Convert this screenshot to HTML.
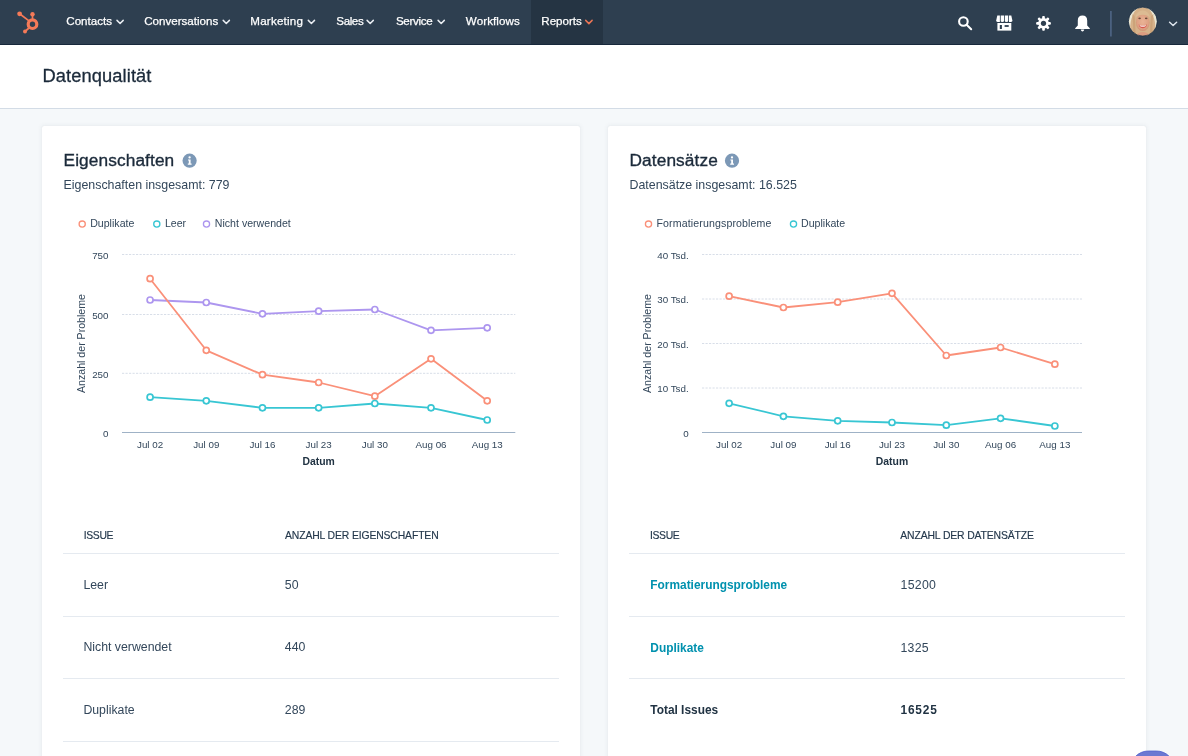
<!DOCTYPE html>
<html><head><meta charset="utf-8">
<style>
*{margin:0;padding:0;box-sizing:border-box}
html,body{width:1188px;height:756px;overflow:hidden;background:#f5f8fa;font-family:"Liberation Sans",sans-serif;color:#33475b}
.a{position:absolute;white-space:nowrap;line-height:1}
#nav{position:absolute;left:0;top:0;width:1188px;height:45px;background:#2e3f50;border-bottom:1px solid #17283b}
#rep{position:absolute;left:531px;top:0;width:72px;height:44px;background:#253443}
#hdr{position:absolute;left:0;top:45px;width:1188px;height:64px;background:#fff;border-bottom:1px solid #d3dce6}
.card{position:absolute;top:126px;width:538px;height:640px;background:#fff;border-radius:2px;box-shadow:0 0 1px rgba(45,62,80,.10),0 0 4px 1px rgba(45,62,80,.05)}
.nv{position:absolute;top:15.1px;font-size:11.6px;color:#fff;line-height:1;white-space:nowrap;-webkit-text-stroke:.25px #fff}
.ttl{font-size:17.3px;color:#1b2a3a;letter-spacing:.1px;-webkit-text-stroke:.35px #1b2a3a}
.sub{font-size:12.4px;color:#33475b}
.lg{font-size:10.6px;color:#33475b}
.th{font-size:10.4px;color:#24384c;-webkit-text-stroke:.15px #24384c;letter-spacing:-.13px}
.td{font-size:12.3px;color:#33475b}
.lk{font-size:11.9px;color:#0091ae;font-weight:bold}
.bd{font-size:11.9px;color:#213343;font-weight:bold}
.ln{position:absolute;height:1px;background:#e5eaf0}
svg text{font-family:"Liberation Sans",sans-serif}
.tk{font-size:9.8px;fill:#33475b}
.dt{font-size:10.4px;font-weight:bold;fill:#213343}
.yl{font-size:10.6px;fill:#33475b}
</style></head><body>
<div id="pg" style="position:absolute;left:0;top:0;width:1188px;height:756px;overflow:hidden;background:#f5f8fa;will-change:transform">
<div id="nav"></div>
<div id="rep"></div>
<div id="hdr"></div>

<!-- nav text -->
<div class="nv" style="left:66.3px">Contacts</div>
<div class="nv" style="left:144.2px">Conversations</div>
<div class="nv" style="left:250.3px;letter-spacing:.22px">Marketing</div>
<div class="nv" style="left:336.3px;letter-spacing:-.4px">Sales</div>
<div class="nv" style="left:395.9px;letter-spacing:-.3px">Service</div>
<div class="nv" style="left:465.8px;letter-spacing:.1px">Workflows</div>
<div class="nv" style="left:541.3px">Reports</div>

<div class="a" style="left:42.5px;top:67.1px;font-size:18.3px;letter-spacing:.1px;color:#1b2a3a;-webkit-text-stroke:.3px #1b2a3a">Datenqualität</div>

<div class="card" style="left:42px"></div>
<div class="card" style="left:608px"></div>

<!-- left card text -->
<div class="a ttl" style="left:63.5px;top:152.3px">Eigenschaften</div>
<div class="a sub" style="left:63.5px;top:178.5px">Eigenschaften insgesamt: 779</div>
<div class="a lg" style="left:90.2px;top:217.7px">Duplikate</div>
<div class="a lg" style="left:164.9px;top:217.7px">Leer</div>
<div class="a lg" style="left:214.8px;top:217.7px">Nicht verwendet</div>

<div class="a th" style="left:83.7px;top:531.2px;letter-spacing:-.35px">ISSUE</div>
<div class="a th" style="left:285px;top:531.2px">ANZAHL DER EIGENSCHAFTEN</div>
<div class="ln" style="left:63px;top:553px;width:496px"></div>
<div class="a td" style="left:83.4px;top:578.6px">Leer</div>
<div class="a td" style="left:284.8px;top:578.6px">50</div>
<div class="ln" style="left:63px;top:616px;width:496px"></div>
<div class="a td" style="left:83.4px;top:641.2px">Nicht verwendet</div>
<div class="a td" style="left:284.8px;top:641.2px">440</div>
<div class="ln" style="left:63px;top:678px;width:496px"></div>
<div class="a td" style="left:83.4px;top:703.8px">Duplikate</div>
<div class="a td" style="left:284.8px;top:703.8px">289</div>
<div class="ln" style="left:63px;top:741px;width:496px"></div>

<!-- right card text -->
<div class="a ttl" style="left:629.5px;top:152.3px">Datensätze</div>
<div class="a sub" style="left:629.5px;top:178.5px">Datensätze insgesamt: 16.525</div>
<div class="a lg" style="left:656.4px;top:217.7px;letter-spacing:.13px">Formatierungsprobleme</div>
<div class="a lg" style="left:801px;top:217.7px">Duplikate</div>

<div class="a th" style="left:650px;top:531.2px;letter-spacing:-.35px">ISSUE</div>
<div class="a th" style="left:900.3px;top:531.2px">ANZAHL DER DATENSÄTZE</div>
<div class="ln" style="left:629px;top:553px;width:496px"></div>
<div class="a lk" style="left:650.3px;top:580px">Formatierungsprobleme</div>
<div class="a td" style="left:900.5px;top:578.6px;letter-spacing:.3px">15200</div>
<div class="ln" style="left:629px;top:616px;width:496px"></div>
<div class="a lk" style="left:650.3px;top:643px">Duplikate</div>
<div class="a td" style="left:900.5px;top:641.9px;letter-spacing:.25px">1325</div>
<div class="ln" style="left:629px;top:678px;width:496px"></div>
<div class="a bd" style="left:650.3px;top:705.4px">Total Issues</div>
<div class="a bd" style="left:900.5px;top:705.4px;letter-spacing:.8px">16525</div>

<svg style="position:absolute;left:0;top:0" width="1188" height="756" viewBox="0 0 1188 756">
<!-- nav chevrons -->
<g fill="none" stroke="#e9edf2" stroke-width="1.5" stroke-linecap="round" stroke-linejoin="round">
<path d="M117 20.4l3.1 3.1l3.1-3.1"/>
<path d="M223.2 20.4l3.1 3.1l3.1-3.1"/>
<path d="M308.3 20.4l3.1 3.1l3.1-3.1"/>
<path d="M367.1 20.4l3.1 3.1l3.1-3.1"/>
<path d="M438.1 20.4l3.1 3.1l3.1-3.1"/>
<path d="M1169.6 22.3l3.5 3.2l3.5-3.2" stroke="#dfe6ee"/>
</g>
<path d="M585.7 20.4l3.2 3.2l3.2-3.2" fill="none" stroke="#ea7556" stroke-width="1.5" stroke-linecap="round" stroke-linejoin="round"/>
<!-- hubspot logo -->
<g fill="#f57a58" stroke="#f57a58">
<circle cx="32.5" cy="24.2" r="4.3" fill="none" stroke-width="3.2"/>
<line x1="19.6" y1="13.8" x2="30" y2="21.6" stroke-width="1.7"/>
<line x1="32.5" y1="14.3" x2="32.5" y2="19.5" stroke-width="1.7"/>
<line x1="25" y1="31.5" x2="29.5" y2="27.5" stroke-width="1.7"/>
<circle cx="19.6" cy="13.8" r="2.4" stroke="none"/>
<circle cx="32.5" cy="14.3" r="2.2" stroke="none"/>
<circle cx="25" cy="31.5" r="2" stroke="none"/>
</g>
<!-- search -->
<circle cx="963.4" cy="21.5" r="4.3" fill="none" stroke="#fff" stroke-width="2.1"/>
<line x1="966.6" y1="24.7" x2="971.2" y2="29.3" stroke="#fff" stroke-width="2" stroke-linecap="round"/>
<!-- marketplace -->
<g fill="#fff">
<path d="M997.3 15.5H999.9V22H997.6Q996 22 996.2 20.6Z"/>
<path d="M1000.7 15.5H1004V21.1Q1004 22 1002.35 22Q1000.7 22 1000.7 21.1Z"/>
<path d="M1004.8 15.5H1008.2V21.1Q1008.2 22 1006.5 22Q1004.8 22 1004.8 21.1Z"/>
<path d="M1009 15.5H1011.3L1012.4 20.6Q1012.6 22 1011 22H1009Z"/>
<rect x="997.4" y="23" width="13.9" height="7.6"/>
</g>
<g fill="#2e3f50">
<rect x="999.8" y="25" width="2.1" height="4"/>
<rect x="1004.6" y="25.1" width="4.1" height="1.8"/>
</g>
<!-- gear -->
<g transform="translate(1043.5 23.3)" fill="#fff">
<circle r="5.3"/>
<g id="teeth"><rect x="-1.35" y="-7.4" width="2.7" height="3.6" rx="1"/></g>
<use href="#teeth" transform="rotate(45)"/><use href="#teeth" transform="rotate(90)"/><use href="#teeth" transform="rotate(135)"/>
<use href="#teeth" transform="rotate(180)"/><use href="#teeth" transform="rotate(225)"/><use href="#teeth" transform="rotate(270)"/><use href="#teeth" transform="rotate(315)"/>
<circle r="2.6" fill="#2e3f50"/>
</g>
<!-- bell -->
<path d="M1082.5 15.6c-3 0-4.7 1.9-4.7 4.9v5l-2.6 2.7v.7h14.6v-.7l-2.6-2.7v-5c0-3-1.7-4.9-4.7-4.9z" fill="#fff"/>
<path d="M1080.8 29.6h3.4c0 1.1-.8 1.9-1.7 1.9s-1.7-.8-1.7-1.9z" fill="#fff"/>
<!-- separator -->
<rect x="1110" y="11" width="1.8" height="25.5" fill="#4b6180"/>
<!-- avatar -->
<defs>
<clipPath id="avc"><circle cx="1142.8" cy="21.6" r="14.3"/></clipPath>
<radialGradient id="skin" cx="50%" cy="45%" r="60%">
<stop offset="0" stop-color="#eab295"/><stop offset=".7" stop-color="#dea183"/><stop offset="1" stop-color="#c98a6c"/>
</radialGradient>
</defs>
<g clip-path="url(#avc)">
<rect x="1128" y="7" width="30" height="30" fill="#e9e6d3"/>
<path d="M1130.5 37c-1-9 0-17 2-21c2-6 6-9 10.3-9s8.5 3 10.3 9c2 4 3 12 2 21z" fill="#d6b28a"/>
<ellipse cx="1142.8" cy="22.5" rx="6.8" ry="8.6" fill="url(#skin)"/>
<path d="M1135.5 17.5c.5-4 3.5-7 7.3-7s6.8 3 7.3 7c-2-2.2-4.5-2.8-7.3-2.8s-5.3.6-7.3 2.8z" fill="#dcbb93"/>
<path d="M1136 37c.5-3 3-5 6.8-5s6.3 2 6.8 5z" fill="#dc9c80"/>
<path d="M1132 14c1 5 1.5 12 1 20l2.5 1c0-8-.3-14-1-19z" fill="#c49a6e" opacity=".6"/>
<path d="M1153.6 14c-1 5-1.5 12-1 20l-2.5 1c0-8 .3-14 1-19z" fill="#c49a6e" opacity=".6"/>
<ellipse cx="1139.6" cy="18.4" rx="1.3" ry=".8" fill="#6b4a3a"/>
<ellipse cx="1146.2" cy="18.4" rx="1.3" ry=".8" fill="#6b4a3a"/>
<path d="M1138.6 24.6c2.5 1.2 5.9 1.2 8.4 0c-.6 2.6-2.2 3.6-4.2 3.6s-3.6-1-4.2-3.6z" fill="#d9574f"/>
<path d="M1139.3 24.9c2.2.9 4.8.9 7 0c-.4 1.3-1.8 1.8-3.5 1.8s-3.1-.5-3.5-1.8z" fill="#f6efe9"/>
</g>
<circle cx="1142.8" cy="21.6" r="14.5" fill="none" stroke="#1b2c40" stroke-width=".8"/>
<!-- info icons -->
<g transform="translate(189.6 160.7)">
<circle r="7.1" fill="#7c98b6"/>
<circle cx="0" cy="-3.3" r="1.15" fill="#fff"/>
<path d="M-1.6 -1.3h2.6v4.2h1v1.2h-3.8v-1.2h1v-3h-.8z" fill="#fff"/>
</g>
<g transform="translate(732 160.7)">
<circle r="7.1" fill="#7c98b6"/>
<circle cx="0" cy="-3.3" r="1.15" fill="#fff"/>
<path d="M-1.6 -1.3h2.6v4.2h1v1.2h-3.8v-1.2h1v-3h-.8z" fill="#fff"/>
</g>
<!-- legend markers -->
<circle cx="82.2" cy="224.1" r="3.1" fill="#fff" stroke="#fa9079" stroke-width="1.3"/>
<circle cx="156.8" cy="224.1" r="3.1" fill="#fff" stroke="#38c6d3" stroke-width="1.3"/>
<circle cx="206.5" cy="224.1" r="3.1" fill="#fff" stroke="#ad96ef" stroke-width="1.3"/>
<circle cx="648.5" cy="224.1" r="3.1" fill="#fff" stroke="#fa9079" stroke-width="1.3"/>
<circle cx="793.5" cy="224.1" r="3.1" fill="#fff" stroke="#38c6d3" stroke-width="1.3"/>
<text x="108.5" y="436.80" text-anchor="end" class="tk">0</text>
<line x1="122" y1="373.30" x2="515.3" y2="373.30" stroke="#d8dee8" stroke-width="1" stroke-dasharray="2.2 1.3"/>
<text x="108.5" y="377.60" text-anchor="end" class="tk">250</text>
<line x1="122" y1="314.50" x2="515.3" y2="314.50" stroke="#d8dee8" stroke-width="1" stroke-dasharray="2.2 1.3"/>
<text x="108.5" y="318.80" text-anchor="end" class="tk">500</text>
<line x1="122" y1="254.50" x2="515.3" y2="254.50" stroke="#d8dee8" stroke-width="1" stroke-dasharray="2.2 1.3"/>
<text x="108.5" y="258.80" text-anchor="end" class="tk">750</text>
<line x1="122" y1="432.5" x2="515.3" y2="432.5" stroke="#9fb2c6" stroke-width="1.1"/>
<text x="150.09" y="448.4" text-anchor="middle" class="tk">Jul 02</text>
<text x="206.28" y="448.4" text-anchor="middle" class="tk">Jul 09</text>
<text x="262.46" y="448.4" text-anchor="middle" class="tk">Jul 16</text>
<text x="318.65" y="448.4" text-anchor="middle" class="tk">Jul 23</text>
<text x="374.84" y="448.4" text-anchor="middle" class="tk">Jul 30</text>
<text x="431.02" y="448.4" text-anchor="middle" class="tk">Aug 06</text>
<text x="487.21" y="448.4" text-anchor="middle" class="tk">Aug 13</text>
<text x="318.65" y="465" text-anchor="middle" class="dt">Datum</text>
<text transform="translate(85.2,343.50) rotate(-90)" text-anchor="middle" class="yl">Anzahl der Probleme</text>
<polyline points="150.09,300 206.28,302.5 262.46,313.8 318.65,311.2 374.84,309.5 431.02,330.3 487.21,327.8" fill="none" stroke="#ad96ef" stroke-width="1.8" stroke-linejoin="round"/>
<circle cx="150.09" cy="300" r="3" fill="#fff" stroke="#ad96ef" stroke-width="1.7"/>
<circle cx="206.28" cy="302.5" r="3" fill="#fff" stroke="#ad96ef" stroke-width="1.7"/>
<circle cx="262.46" cy="313.8" r="3" fill="#fff" stroke="#ad96ef" stroke-width="1.7"/>
<circle cx="318.65" cy="311.2" r="3" fill="#fff" stroke="#ad96ef" stroke-width="1.7"/>
<circle cx="374.84" cy="309.5" r="3" fill="#fff" stroke="#ad96ef" stroke-width="1.7"/>
<circle cx="431.02" cy="330.3" r="3" fill="#fff" stroke="#ad96ef" stroke-width="1.7"/>
<circle cx="487.21" cy="327.8" r="3" fill="#fff" stroke="#ad96ef" stroke-width="1.7"/>
<polyline points="150.09,278.7 206.28,350.3 262.46,374.7 318.65,382.5 374.84,396.2 431.02,358.8 487.21,400.8" fill="none" stroke="#fa9079" stroke-width="1.8" stroke-linejoin="round"/>
<circle cx="150.09" cy="278.7" r="3" fill="#fff" stroke="#fa9079" stroke-width="1.7"/>
<circle cx="206.28" cy="350.3" r="3" fill="#fff" stroke="#fa9079" stroke-width="1.7"/>
<circle cx="262.46" cy="374.7" r="3" fill="#fff" stroke="#fa9079" stroke-width="1.7"/>
<circle cx="318.65" cy="382.5" r="3" fill="#fff" stroke="#fa9079" stroke-width="1.7"/>
<circle cx="374.84" cy="396.2" r="3" fill="#fff" stroke="#fa9079" stroke-width="1.7"/>
<circle cx="431.02" cy="358.8" r="3" fill="#fff" stroke="#fa9079" stroke-width="1.7"/>
<circle cx="487.21" cy="400.8" r="3" fill="#fff" stroke="#fa9079" stroke-width="1.7"/>
<polyline points="150.09,397.2 206.28,400.8 262.46,407.8 318.65,407.8 374.84,403.5 431.02,407.8 487.21,420" fill="none" stroke="#38c6d3" stroke-width="1.8" stroke-linejoin="round"/>
<circle cx="150.09" cy="397.2" r="3" fill="#fff" stroke="#38c6d3" stroke-width="1.7"/>
<circle cx="206.28" cy="400.8" r="3" fill="#fff" stroke="#38c6d3" stroke-width="1.7"/>
<circle cx="262.46" cy="407.8" r="3" fill="#fff" stroke="#38c6d3" stroke-width="1.7"/>
<circle cx="318.65" cy="407.8" r="3" fill="#fff" stroke="#38c6d3" stroke-width="1.7"/>
<circle cx="374.84" cy="403.5" r="3" fill="#fff" stroke="#38c6d3" stroke-width="1.7"/>
<circle cx="431.02" cy="407.8" r="3" fill="#fff" stroke="#38c6d3" stroke-width="1.7"/>
<circle cx="487.21" cy="420" r="3" fill="#fff" stroke="#38c6d3" stroke-width="1.7"/>
<text x="688.7" y="436.80" text-anchor="end" class="tk">0</text>
<line x1="702" y1="388.00" x2="1082" y2="388.00" stroke="#d8dee8" stroke-width="1" stroke-dasharray="2.2 1.3"/>
<text x="688.7" y="392.30" text-anchor="end" class="tk">10 Tsd.</text>
<line x1="702" y1="343.50" x2="1082" y2="343.50" stroke="#d8dee8" stroke-width="1" stroke-dasharray="2.2 1.3"/>
<text x="688.7" y="347.80" text-anchor="end" class="tk">20 Tsd.</text>
<line x1="702" y1="299.00" x2="1082" y2="299.00" stroke="#d8dee8" stroke-width="1" stroke-dasharray="2.2 1.3"/>
<text x="688.7" y="303.30" text-anchor="end" class="tk">30 Tsd.</text>
<line x1="702" y1="254.50" x2="1082" y2="254.50" stroke="#d8dee8" stroke-width="1" stroke-dasharray="2.2 1.3"/>
<text x="688.7" y="258.80" text-anchor="end" class="tk">40 Tsd.</text>
<line x1="702" y1="432.5" x2="1082" y2="432.5" stroke="#9fb2c6" stroke-width="1.1"/>
<text x="729.14" y="448.4" text-anchor="middle" class="tk">Jul 02</text>
<text x="783.43" y="448.4" text-anchor="middle" class="tk">Jul 09</text>
<text x="837.71" y="448.4" text-anchor="middle" class="tk">Jul 16</text>
<text x="892.00" y="448.4" text-anchor="middle" class="tk">Jul 23</text>
<text x="946.29" y="448.4" text-anchor="middle" class="tk">Jul 30</text>
<text x="1000.57" y="448.4" text-anchor="middle" class="tk">Aug 06</text>
<text x="1054.86" y="448.4" text-anchor="middle" class="tk">Aug 13</text>
<text x="892.00" y="465" text-anchor="middle" class="dt">Datum</text>
<text transform="translate(651.2,343.50) rotate(-90)" text-anchor="middle" class="yl">Anzahl der Probleme</text>
<polyline points="729.14,296.2 783.43,307.5 837.71,302.2 892.00,293.3 946.29,355.5 1000.57,347.5 1054.86,364.2" fill="none" stroke="#fa9079" stroke-width="1.8" stroke-linejoin="round"/>
<circle cx="729.14" cy="296.2" r="3" fill="#fff" stroke="#fa9079" stroke-width="1.7"/>
<circle cx="783.43" cy="307.5" r="3" fill="#fff" stroke="#fa9079" stroke-width="1.7"/>
<circle cx="837.71" cy="302.2" r="3" fill="#fff" stroke="#fa9079" stroke-width="1.7"/>
<circle cx="892.00" cy="293.3" r="3" fill="#fff" stroke="#fa9079" stroke-width="1.7"/>
<circle cx="946.29" cy="355.5" r="3" fill="#fff" stroke="#fa9079" stroke-width="1.7"/>
<circle cx="1000.57" cy="347.5" r="3" fill="#fff" stroke="#fa9079" stroke-width="1.7"/>
<circle cx="1054.86" cy="364.2" r="3" fill="#fff" stroke="#fa9079" stroke-width="1.7"/>
<polyline points="729.14,403.3 783.43,416.3 837.71,420.8 892.00,422.5 946.29,425.2 1000.57,418.3 1054.86,426" fill="none" stroke="#38c6d3" stroke-width="1.8" stroke-linejoin="round"/>
<circle cx="729.14" cy="403.3" r="3" fill="#fff" stroke="#38c6d3" stroke-width="1.7"/>
<circle cx="783.43" cy="416.3" r="3" fill="#fff" stroke="#38c6d3" stroke-width="1.7"/>
<circle cx="837.71" cy="420.8" r="3" fill="#fff" stroke="#38c6d3" stroke-width="1.7"/>
<circle cx="892.00" cy="422.5" r="3" fill="#fff" stroke="#38c6d3" stroke-width="1.7"/>
<circle cx="946.29" cy="425.2" r="3" fill="#fff" stroke="#38c6d3" stroke-width="1.7"/>
<circle cx="1000.57" cy="418.3" r="3" fill="#fff" stroke="#38c6d3" stroke-width="1.7"/>
<circle cx="1054.86" cy="426" r="3" fill="#fff" stroke="#38c6d3" stroke-width="1.7"/>
<!-- chat bubble -->
<rect x="1130.4" y="751" width="44" height="40" rx="18" fill="#6b78d2" stroke="#4f5fcb" stroke-width=".8"/>
</svg>
</div>
</body></html>
